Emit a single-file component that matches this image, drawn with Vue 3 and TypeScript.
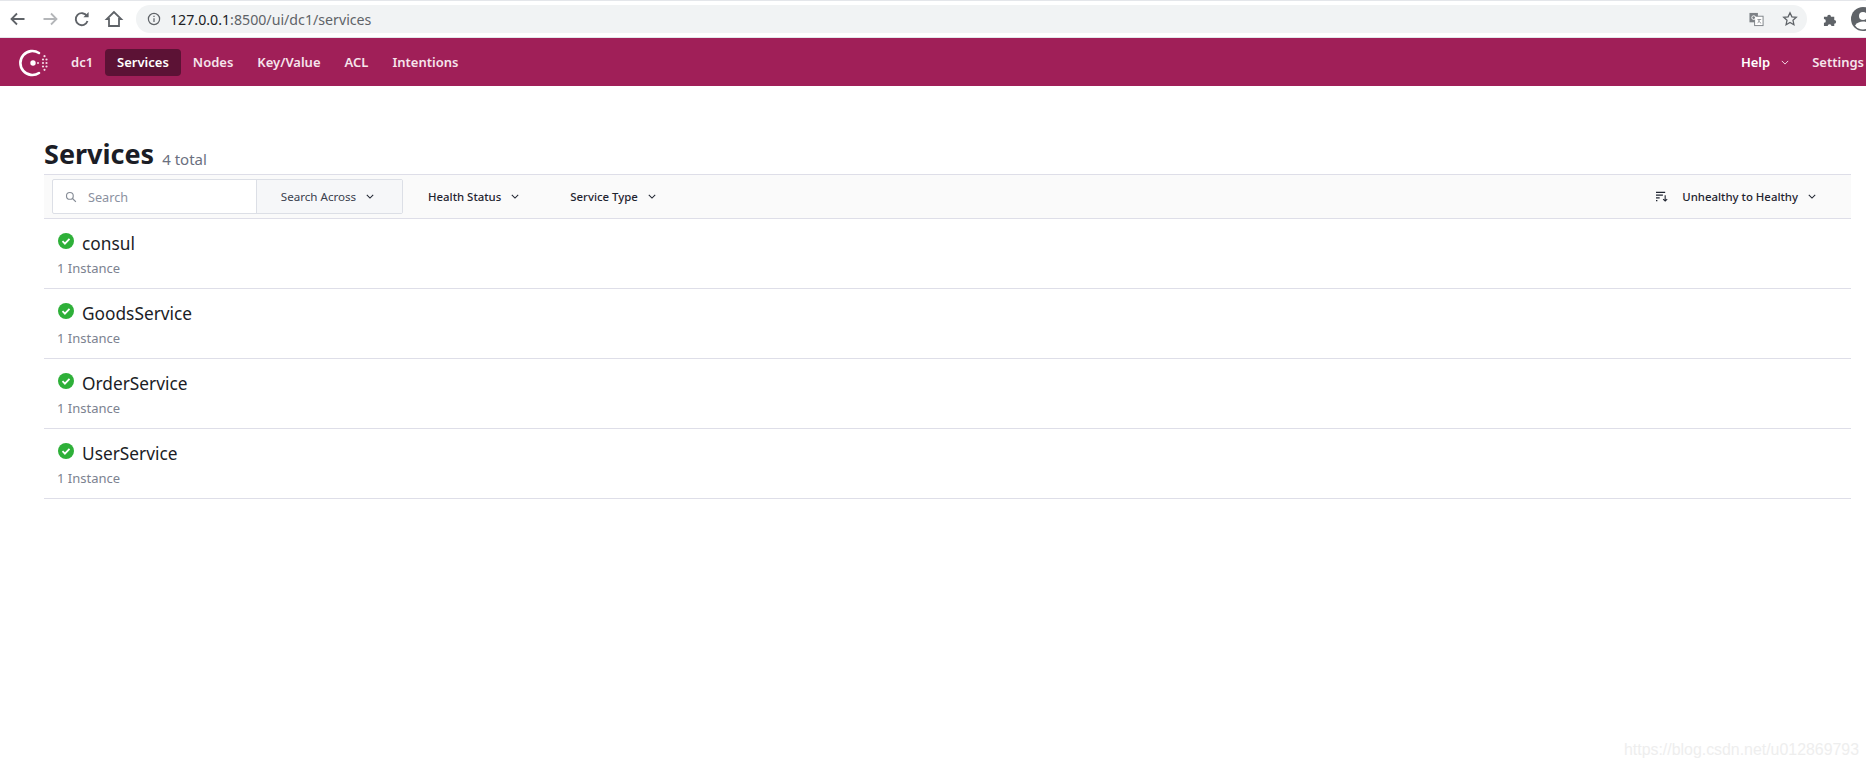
<script setup lang="ts">
const navItems: string[] = ['Nodes', 'Key/Value', 'ACL', 'Intentions']
const services: string[] = ['consul', 'GoodsService', 'OrderService', 'UserService']
</script>

<template>
  <div class="page">
    <header class="chrome">
      <div class="chrome-nav">
        <svg class="cicon" viewBox="0 0 20 20" width="20" height="20" fill="none" stroke="#5f6368" stroke-width="1.8"><path d="M16.5 10H4M9 4.5 3.500 10 9 15.500" /></svg>
        <svg class="cicon" viewBox="0 0 20 20" width="20" height="20" fill="none" stroke="#b4b6b9" stroke-width="1.8"><path d="M3.500 10H16M11 4.500 16.500 10 11 15.500" /></svg>
        <svg class="cicon" viewBox="0 0 20 20" width="20" height="20" fill="none" stroke="#5f6368" stroke-width="1.9"><path d="M15.500 12a6 6 0 1 1-.6-5" /><path d="M16.600 3v5.200h-5.200z" fill="#5f6368" stroke="none" /></svg>
        <svg class="cicon" viewBox="0 0 20 20" width="20" height="20" fill="none" stroke="#5f6368" stroke-width="1.8"><path d="M10 3 2.800 10H5v7h10v-7h2.200z" /></svg>
      </div>
      <div class="omnibox">
        <svg class="info" viewBox="0 0 16 16" width="14" height="14" fill="none" stroke="#5f6368" stroke-width="1.400"><circle cx="8" cy="8" r="6.400" /><path d="M8 7v4.500M8 4.200v1.500" /></svg>
        <span class="url"><span class="host">127.0.0.1</span>:8500/ui/dc1/services</span>
        <span class="omni-spacer"></span>
        <svg viewBox="0 0 16 16" width="15" height="15"><rect x="0.500" y="1" width="9" height="10" fill="#7d8186" /><rect x="6" y="4.500" width="9" height="10" fill="#fff" stroke="#7d8186" /><circle cx="5" cy="6" r="2" fill="none" stroke="#fff" /><path d="M9 8h4M11 8c0 2-1 3-2 4M10 9c.5 1.500 2 2.500 3 3" fill="none" stroke="#7d8186" stroke-width=".8" /></svg>
        <svg class="star" viewBox="0 0 16 16" width="16" height="16" fill="none" stroke="#5f6368" stroke-width="1.300"><path d="m8 1.800 1.900 4 4.400.5-3.300 3 .9 4.400L8 11.500l-3.900 2.200.9-4.400-3.300-3 4.400-.5z" /></svg>
      </div>
      <svg class="puzzle" viewBox="0 0 16 16" width="15" height="15" fill="#5f6368"><path d="M1 5h3.500a2 2 0 1 1 4 0H12v3.500a2 2 0 1 1 0 4V15H9a2 2 0 1 0-4 0H1v-3.500a2 2 0 1 0 0-4z" /></svg>
      <svg class="avatar" viewBox="0 0 24 24" width="24" height="24"><circle cx="12" cy="12" r="12" fill="#5f6368" /><circle cx="12" cy="9" r="4" fill="#fff" /><path d="M4 18.500c2-3 5-4 8-4s6 1 8 4a10 10 0 0 1-16 0z" fill="#fff" /></svg>
    </header>

    <nav class="topnav">
      <svg class="logo" viewBox="0 0 30 28" width="30" height="28">
        <path d="M20 4A12 12 0 1 0 20 24" fill="none" stroke="#fff" stroke-width="2.600" stroke-linecap="round" />
        <circle cx="14" cy="14" r="2.700" fill="#fff" />
        <g fill="#f3dce7">
          <circle cx="19" cy="14" r="1" /><circle cx="24" cy="10.500" r="1.100" /><circle cx="27.500" cy="10.500" r="1.100" /><circle cx="24" cy="14" r="1.100" /><circle cx="27.500" cy="14" r="1.100" /><circle cx="24" cy="17.500" r="1.100" /><circle cx="27.500" cy="17.500" r="1.100" /><circle cx="25.500" cy="7.200" r="1.100" /><circle cx="25.500" cy="20.800" r="1.100" />
        </g>
      </svg>
      <a class="nav-link dc">dc1</a>
      <a class="nav-link active">Services</a>
      <a v-for="item in navItems" :key="item" class="nav-link">{{ item }}</a>
      <span class="nav-spacer"></span>
      <a class="nav-link help">Help
        <svg viewBox="0 0 10 6" width="8" height="5" fill="none" stroke="#f3dce7" stroke-width="1.200"><path d="m1 1 4 4 4-4" /></svg>
      </a>
      <a class="nav-link settings">Settings</a>
    </nav>

    <main class="content">
      <div class="title-row">
        <h1>Services</h1>
        <span class="total">4 total</span>
      </div>
      <div class="toolbar">
        <div class="search-group">
          <label class="search">
            <svg viewBox="0 0 16 16" width="12" height="12" fill="none" stroke="#858b95" stroke-width="1.500"><circle cx="6.500" cy="6.500" r="4.500" /><path d="m10 10 4.500 4.500" /></svg>
            <span>Search</span>
          </label>
          <button class="across">Search Across
            <svg viewBox="0 0 10 6" width="8" height="5" fill="none" stroke="#1f2430" stroke-width="1.300"><path d="m1 1 4 4 4-4" /></svg>
          </button>
        </div>
        <button class="filter health">Health Status
          <svg viewBox="0 0 10 6" width="8" height="5" fill="none" stroke="#1f2430" stroke-width="1.300"><path d="m1 1 4 4 4-4" /></svg>
        </button>
        <button class="filter type">Service Type
          <svg viewBox="0 0 10 6" width="8" height="5" fill="none" stroke="#1f2430" stroke-width="1.300"><path d="m1 1 4 4 4-4" /></svg>
        </button>
        <span class="tool-spacer"></span>
        <svg class="sort-icon" viewBox="0 0 14 12" width="13" height="11" fill="none" stroke="#1f2430" stroke-width="1.200"><path d="M1 1.500h10M1 4.500h7.500M1 7.500h4M1 10.500h1.500M11 4.500v6.500M8.800 8.800 11 11l2.200-2.200" /></svg>
        <button class="filter sort">Unhealthy to Healthy
          <svg viewBox="0 0 10 6" width="8" height="5" fill="none" stroke="#1f2430" stroke-width="1.300"><path d="m1 1 4 4 4-4" /></svg>
        </button>
      </div>
      <ul class="list">
        <li v-for="name in services" :key="name" class="row">
          <div class="row-head">
            <svg class="check" viewBox="0 0 16 16" width="16" height="16"><circle cx="8" cy="8" r="8" fill="#2eb039" /><path d="m4.500 8.200 2.400 2.400 4.600-4.800" fill="none" stroke="#fff" stroke-width="1.800" /></svg>
            <span class="name">{{ name }}</span>
          </div>
          <div class="instances">1 Instance</div>
        </li>
      </ul>
    </main>
    <div class="watermark">https://blog.csdn.net/u012869793</div>
  </div>
</template>

<style>
html, body { margin: 0; background: #fff; }
</style>

<style scoped>
.page {
  position: relative;
  width: 1866px;
  height: 767px;
  overflow: hidden;
  font-family: "Noto Sans", "Open Sans", sans-serif;
  color: #1f2430;
  background: #fff;
}
.chrome {
  height: 38px;
  box-sizing: border-box;
  display: flex;
  align-items: center;
  padding: 0 0 0 8px;
  background: #fff;
  border-top: 1px solid #e4e6ea;
  border-bottom: 1px solid #e4e6ea;
}
.chrome-nav { display: flex; align-items: center; gap: 12px; margin-right: 12px; }
.cicon { flex: none; }
.omnibox {
  width: 1671px;
  height: 28px;
  flex: none;
  display: flex;
  align-items: center;
  box-sizing: border-box;
  padding: 0 9px 0 11px;
  background: #f1f3f4;
  border-radius: 14px;
}
.url { margin-left: 9px; font-size: 14.200px; color: #5f6368; }
.host { color: #202124; }
.omni-spacer { flex: 1; }
.star { margin-left: 18px; }
.puzzle { margin-left: 16px; flex: none; }
.avatar { margin-left: 13px; flex: none; }
.topnav {
  height: 48px;
  display: flex;
  align-items: center;
  box-sizing: border-box;
  padding: 0 0 0 19px;
  background: #a01f58;
  white-space: nowrap;
}
.logo { flex: none; margin: 2px 22px 0 0; }
.nav-link {
  display: flex;
  align-items: center;
  height: 27px;
  padding: 0 12px;
  font-size: 13px;
  font-weight: 600;
  color: #f6e4ec;
  border-radius: 4px;
}
.dc { padding: 0; margin-right: 12px; }
.active { background: #5c1235; color: #fff; }
.nav-spacer { flex: 1; }
.help { padding: 0; gap: 11px; margin-right: 23px; color: #fff; }
.settings { padding: 0; margin-right: 2px; color: #f6e4ec; }
.content { padding: 0 15px 0 44px; }
.title-row { height: 88px; display: flex; align-items: flex-end; box-sizing: border-box; padding-bottom: 1px; }
h1 { margin: 0; font-size: 27px; line-height: 38px; font-weight: 700; color: #1b1d26; }
.total { margin-left: 8px; font-size: 15px; line-height: 28px; color: #6b7080; }
.toolbar {
  height: 45px;
  display: flex;
  align-items: center;
  box-sizing: border-box;
  border-top: 1px solid #dedee8;
  border-bottom: 1px solid #dedee8;
  background: #fafafa;
  padding: 0 35px 0 8px;
}
.search-group {
  display: flex;
  height: 35px;
  box-sizing: border-box;
  border: 1px solid #dcdfe6;
  border-radius: 2px;
  background: #fff;
}
.search {
  width: 204px;
  box-sizing: border-box;
  display: flex;
  align-items: center;
  gap: 11px;
  padding-left: 12px;
  font-size: 12.700px;
  color: #8b91a0;
  border-right: 1px solid #dcdfe6;
}
button {
  font-family: inherit;
  display: flex;
  align-items: center;
  border: 0;
  background: none;
  padding: 0;
  font-size: 11.400px;
  color: #1f2430;
  white-space: nowrap;
}
.across { width: 145px; justify-content: center; gap: 10px; padding-right: 4px; background: #f6f7f9; color: #3a404d; font-size: 11.600px; box-sizing: border-box; }
.filter { gap: 10px; font-weight: 500; }
.health { margin-left: 25px; }
.type { margin-left: 51px; }
.tool-spacer { flex: 1; }
.sort-icon { margin-right: 14px; }
.list { list-style: none; margin: 0; padding: 0; }
.row {
  height: 70px;
  box-sizing: border-box;
  padding: 12px 0 0 14px;
  border-bottom: 1px solid #dedee8;
}
.row-head { display: flex; align-items: flex-start; gap: 8px; height: 26px; }
.check { margin-top: 2px; flex: none; }
.name { font-size: 17.300px; line-height: 26px; color: #1b1d26; }
.instances { font-size: 13px; line-height: 18px; margin-top: 2px; margin-left: -1px; color: #7c8290; }
.watermark {
  position: absolute;
  right: 7px;
  bottom: 8px;
  font-family: "Liberation Sans", sans-serif;
  font-size: 15.900px;
  color: #eeeeee;
}
</style>
